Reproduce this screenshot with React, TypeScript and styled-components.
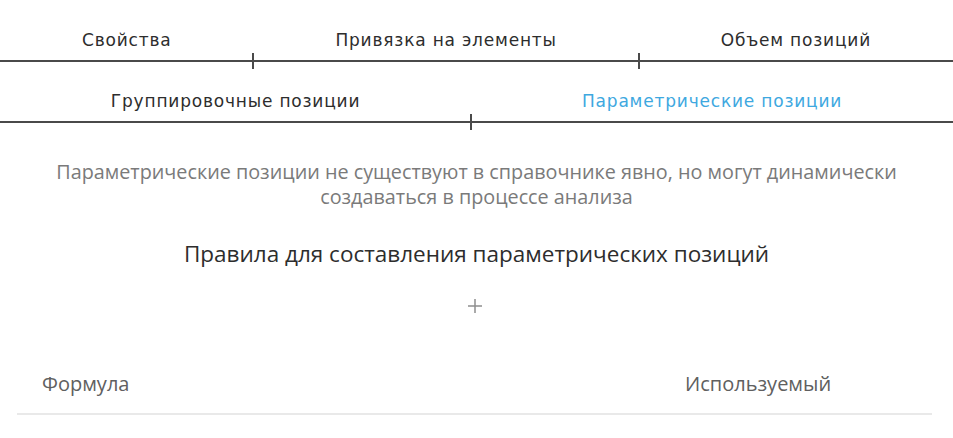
import React, { useState } from "react";
import styled, { createGlobalStyle } from "styled-components";

const Global = createGlobalStyle`
  html, body { margin: 0; padding: 0; background: #fff; }
  body { font-family: "Open Sans", "Noto Sans", sans-serif; }
  * { box-sizing: border-box; }
`;

const Page = styled.div`
  width: 953px;
  padding-top: 23px;
`;

const TabGroup = styled.nav`
  display: flex;
  flex-direction: column;
  gap: 22px;
`;

const TabRow = styled.div`
  display: flex;
  border-bottom: 2px solid #4a4a4a;
`;

const Tab = styled.button<{ $active?: boolean; $divider?: boolean }>`
  flex: 1 1 auto;
  position: relative;
  background: none;
  border: none;
  padding: 7px 0 10px;
  font-family: "DejaVu Sans", sans-serif;
  font-size: 17px;
  letter-spacing: 0.8px;
  line-height: 20px;
  color: ${(p) => (p.$active ? "#3ea8df" : "#2d2d2d")};
  cursor: pointer;
  white-space: nowrap;

  &::after {
    content: "";
    display: ${(p) => (p.$divider ? "block" : "none")};
    position: absolute;
    right: -1px;
    bottom: -9px;
    width: 2px;
    height: 16px;
    background: #4a4a4a;
  }
`;

const Description = styled.p`
  margin: 36px auto 0;
  width: 870px;
  text-align: center;
  font-size: 19.8px;
  line-height: 25px;
  color: #7a7a7a;
`;

const Heading = styled.h2`
  margin: 30px 0 0;
  text-align: center;
  font-weight: 400;
  font-size: 22.5px;
  line-height: 30px;
  color: #2d2d2d;
`;

const AddButton = styled.button`
  display: block;
  margin: 27px auto 0;
  background: none;
  border: none;
  padding: 0;
  width: 20px;
  height: 20px;
  cursor: pointer;
  transform: translateX(-2px);
`;

const Table = styled.div`
  margin: 55px 21px 0 17px;
`;

const HeaderRow = styled.div`
  display: grid;
  grid-template-columns: 1fr 247px;
  padding: 0 0 16px 25px;
  border-bottom: 2px solid #e9e9e9;
`;

const HeaderCell = styled.div`
  font-size: 20px;
  line-height: 26px;
  color: #606060;
`;

const topTabs = ["Свойства", "Привязка на элементы", "Объем позиций"];
const bottomTabs = ["Группировочные позиции", "Параметрические позиции"];

export default function App() {
  const [active, setActive] = useState(bottomTabs[1]);
  const renderRow = (tabs: string[]) => (
    <TabRow>
      {tabs.map((t, i) => (
        <Tab
          key={t}
          $active={active === t}
          $divider={i < tabs.length - 1}
          onClick={() => setActive(t)}
        >
          {t}
        </Tab>
      ))}
    </TabRow>
  );

  return (
    <Page>
      <Global />
      <TabGroup>
        {renderRow(topTabs)}
        {renderRow(bottomTabs)}
      </TabGroup>
      <Description>
        Параметрические позиции не существуют в справочнике явно, но могут динамически
        создаваться в процессе анализа
      </Description>
      <Heading>Правила для составления параметрических позиций</Heading>
      <AddButton aria-label="Добавить правило">
        <svg width="20" height="20" viewBox="0 0 20 20">
          <path d="M10 3v14M3 10h14" stroke="#8f8f8f" strokeWidth="1.5" />
        </svg>
      </AddButton>
      <Table>
        <HeaderRow>
          <HeaderCell>Формула</HeaderCell>
          <HeaderCell>Используемый</HeaderCell>
        </HeaderRow>
      </Table>
    </Page>
  );
}
